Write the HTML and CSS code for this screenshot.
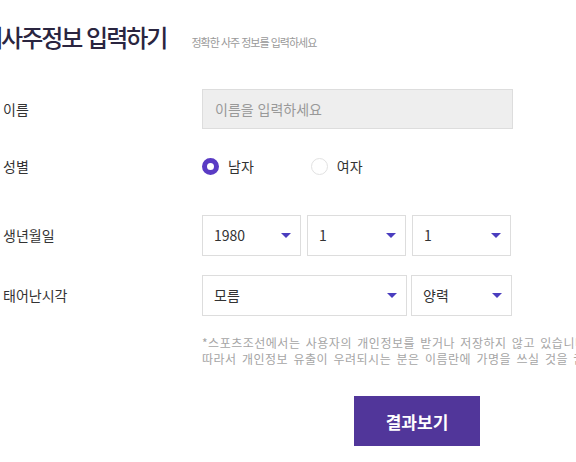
FILE: index.html
```html
<!DOCTYPE html>
<html lang="ko">
<head>
<meta charset="UTF-8">
<meta name="viewport" content="width=device-width, initial-scale=1.0">
<title>사주정보 입력하기</title>
<link rel="stylesheet" href="styles.css">
</head>
<body>
<div class="page">
    <div class="head">
        <h1 class="title">내사주정보 입력하기</h1>
        <span class="subtitle">정확한 사주 정보를 입력하세요</span>
    </div>

    <form class="form" onsubmit="return false;">
        <div class="row row-name">
            <label class="label" for="userName">이름</label>
            <div class="field">
                <input type="text" id="userName" class="text-input" placeholder="이름을 입력하세요">
            </div>
        </div>

        <div class="row row-gender">
            <span class="label">성별</span>
            <div class="field">
                <span class="radio">
                    <span class="radio-dot checked"></span>
                    <span class="radio-text">남자</span>
                </span>
                <span class="radio">
                    <span class="radio-dot"></span>
                    <span class="radio-text">여자</span>
                </span>
            </div>
        </div>

        <div class="row row-birth">
            <span class="label">생년월일</span>
            <div class="field">
                <div class="select w100">
                    <span>1980</span><i class="arrow"></i>
                </div>
                <div class="select w100">
                    <span>1</span><i class="arrow"></i>
                </div>
                <div class="select w100">
                    <span>1</span><i class="arrow"></i>
                </div>
            </div>
        </div>

        <div class="row row-time">
            <span class="label">태어난시각</span>
            <div class="field">
                <div class="select w205">
                    <span>모름</span><i class="arrow"></i>
                </div>
                <div class="select w101 near">
                    <span>양력</span><i class="arrow"></i>
                </div>
            </div>
        </div>

        <div class="notice">
            <p>*스포츠조선에서는 사용자의 개인정보를 받거나 저장하지 않고 있습니다.</p>
            <p>따라서 개인정보 유출이 우려되시는 분은 이름란에 가명을 쓰실 것을 권합니다.</p>
        </div>

        <div class="actions">
            <button type="submit" class="submit">결과보기</button>
        </div>
    </form>
</div>
</body>
</html>
```

FILE: styles.css
```css
html, body {
    margin: 0;
    padding: 0;
    overflow: hidden;
}

body {
    font-family: "Noto Sans CJK KR", "Noto Sans", sans-serif;
    color: #333;
    background: #fff;
}

.page {
    padding-left: 3px;
    width: 700px;
}

.head {
    display: flex;
    align-items: baseline;
    margin-left: -22px;
    padding-top: 21px;
}

.title {
    margin: 0;
    font-size: 24px;
    font-weight: 500;
    letter-spacing: -2px;
    line-height: 32px;
    color: #2a2540;
}

.subtitle {
    margin-left: 25px;
    font-size: 11px;
    letter-spacing: -1px;
    color: #999;
}

.form {
    padding-top: 36px;
}

.row {
    display: flex;
    align-items: center;
    height: 40px;
}

.row-gender {
    margin-top: 17px;
}

.row-birth {
    margin-top: 29px;
}

.row-time {
    margin-top: 20px;
}

.label {
    flex-shrink: 0;
    width: 199px;
    font-size: 14px;
    color: #333;
}

.field {
    display: flex;
    align-items: center;
}

.text-input {
    box-sizing: border-box;
    width: 311px;
    height: 40px;
    padding: 0 12px;
    border: 1px solid #ddd;
    background: #eee;
    font-family: inherit;
    font-size: 14px;
    color: #333;
    outline: none;
}

.text-input::placeholder {
    color: #999;
}

.radio {
    display: flex;
    align-items: center;
    margin-right: 57px;
}

.radio-dot {
    box-sizing: border-box;
    width: 17px;
    height: 17px;
    border-radius: 50%;
    border: 1px solid #e2e2e2;
    background: #fff;
}

.radio-dot.checked {
    border: 5px solid #5a3bc4;
}

.radio-text {
    margin-left: 9px;
    font-size: 14px;
}

.select {
    box-sizing: border-box;
    flex-shrink: 0;
    display: flex;
    align-items: center;
    justify-content: space-between;
    height: 41px;
    padding: 0 9px 0 11px;
    margin-right: 6px;
    border: 1px solid #ddd;
    background: #fff;
    font-size: 14px;
    color: #333;
}

.select:last-child {
    margin-right: 0;
}

.w100 {
    width: 99px;
}

.w101 {
    width: 101px;
}

.w205 {
    width: 205px;
}

.near {
    margin-left: -2px;
}

/* 드롭다운 화살표 */
.arrow {
    width: 0;
    height: 0;
    border-left: 5px solid transparent;
    border-right: 5px solid transparent;
    border-top: 5px solid #4a3dbf;
}

.notice {
    margin: 20px 0 0 199px;
    font-size: 12px;
    line-height: 16px;
    letter-spacing: 0.5px;
    word-spacing: 1.5px;
    color: #a5a5a5;
    white-space: nowrap;
}

.notice p {
    margin: 0;
}

.actions {
    padding: 29px 0 0 351px;
}

.submit {
    width: 126px;
    height: 50px;
    border: none;
    background: #51369a;
    color: #fff;
    font-family: inherit;
    font-size: 17px;
    font-weight: 700;
    cursor: pointer;
}
```
